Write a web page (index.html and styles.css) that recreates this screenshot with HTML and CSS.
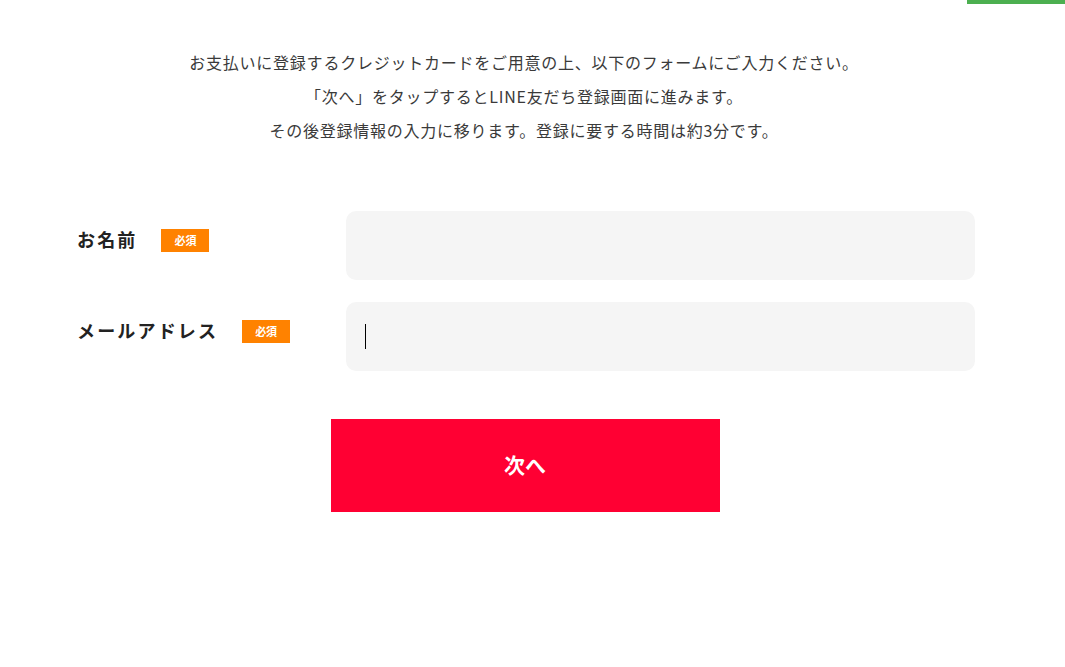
FILE: index.html
```html
<!DOCTYPE html>
<html lang="ja">
<head>
<meta charset="utf-8">
<title>登録フォーム</title>
<link rel="stylesheet" href="styles.css">
</head>
<body>
<div class="topbar"></div>
<main class="wrap">
  <div class="intro">
    <p>お支払いに登録するクレジットカードをご用意の上、以下のフォームにご入力ください。</p>
    <p>「次へ」をタップするとLINE友だち登録画面に進みます。</p>
    <p>その後登録情報の入力に移ります。登録に要する時間は約3分です。</p>
  </div>
  <form class="form">
    <div class="row">
      <div class="label"><span class="label-text">お名前</span><span class="badge">必須</span></div>
      <div class="field"></div>
    </div>
    <div class="row">
      <div class="label"><span class="label-text">メールアドレス</span><span class="badge">必須</span></div>
      <div class="field"><span class="caret"></span></div>
    </div>
    <div class="actions">
      <button type="button" class="next">次へ</button>
    </div>
  </form>
</main>
</body>
</html>
```

FILE: styles.css
```css
html, body {
  margin: 0;
  padding: 0;
  background: #fff;
}
body {
  font-family: "Noto Sans CJK JP", "Noto Sans", sans-serif;
  color: #333;
  position: relative;
}
.topbar {
  position: absolute;
  top: 0;
  right: 0;
  width: 98px;
  height: 4px;
  background: #4caf50;
}
.wrap {
  width: 898px;
  margin-left: 77px;
  padding-top: 45px;
}
.intro {
  text-align: center;
  font-size: 16px;
  letter-spacing: 0.047em;
  line-height: 34px;
  color: #3a3a3a;
  padding-right: 4px;
}
.intro p {
  margin: 0;
}
.form {
  margin-top: 64px;
  display: flex;
  flex-direction: column;
  gap: 22px;
}
.row {
  display: flex;
  align-items: flex-start;
}
.label {
  width: 269px;
  flex: none;
  display: flex;
  align-items: center;
  padding-top: 16px;
  height: 24px;
}
.label-text {
  font-size: 18px;
  font-weight: 700;
  letter-spacing: 0.12em;
  color: #222;
  line-height: 24px;
}
.badge {
  margin-left: 24px;
  width: 48px;
  height: 23px;
  background: #ff8200;
  color: #fff;
  font-size: 11px;
  font-weight: 700;
  display: flex;
  align-items: center;
  justify-content: center;
  margin-top: 2px;
}
.field {
  flex: 1;
  height: 69px;
  background: #f5f5f5;
  border-radius: 10px;
  display: flex;
  align-items: center;
  padding-left: 19px;
}
.caret {
  display: block;
  width: 1px;
  height: 25px;
  background: #000;
}
.actions {
  display: flex;
  justify-content: center;
  padding-top: 26px;
  padding-right: 2px;
}
.next {
  width: 389px;
  height: 93px;
  border: none;
  background: #ff0033;
  color: #fff;
  font-family: "Noto Sans CJK JP", "Noto Sans", sans-serif;
  font-size: 21px;
  font-weight: 700;
  padding: 0 0 4px 0;
  cursor: pointer;
}
```
